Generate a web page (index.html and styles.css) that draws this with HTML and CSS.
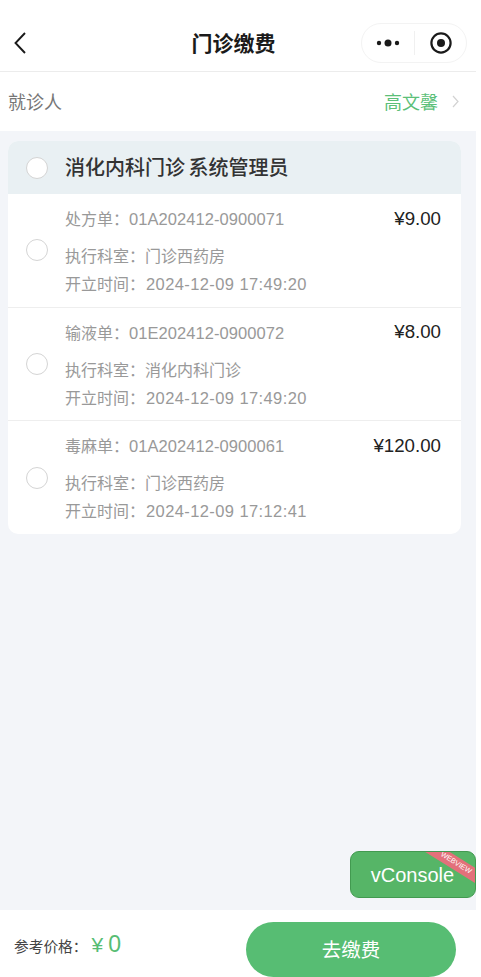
FILE: index.html
```html
<!DOCTYPE html>
<html lang="zh">
<head>
<meta charset="utf-8">
<title>门诊缴费</title>
<link rel="stylesheet" href="styles.css">
</head>
<body>
<div class="page">
  <header class="nav">
    <svg class="back" width="14" height="24" viewBox="0 0 14 24"><path d="M12 2 L2.5 12 L12 22" fill="none" stroke="#1a1a1a" stroke-width="1.9"/></svg>
    <h1 class="nav-title">门诊缴费</h1>
    <div class="capsule">
      <svg class="cap-dots" width="24" height="8" viewBox="0 0 24 8"><circle cx="3" cy="4" r="2.2" fill="#1a1a1a"/><circle cx="12" cy="4" r="3.5" fill="#1a1a1a"/><circle cx="21" cy="4" r="2.2" fill="#1a1a1a"/></svg>
      <span class="cap-sep"></span>
      <svg class="cap-target" width="22" height="22" viewBox="0 0 22 22"><circle cx="11" cy="11" r="9.6" fill="none" stroke="#1a1a1a" stroke-width="2.2"/><circle cx="11" cy="11" r="4" fill="#1a1a1a"/></svg>
    </div>
  </header>
  <section class="patient">
    <span class="patient-label">就诊人</span>
    <span class="patient-name">高文馨</span>
    <svg class="chev" width="7" height="13" viewBox="0 0 7 13"><path d="M1 1 L6 6.5 L1 12" fill="none" stroke="#d2d2d2" stroke-width="1.2"/></svg>
  </section>
  <main class="content">
    <div class="card">
      <div class="card-head">
        <span class="radio radio-head"></span>
        <span class="dept">消化内科门诊 系统管理员</span>
      </div>
      <div class="row">
        <span class="radio"></span>
        <div class="info">
          <div class="info-top"><span class="order">处方单：<span class="code">01A202412-0900071</span></span><span class="price">¥9.00</span></div>
          <div class="line line-dept">执行科室：门诊西药房</div>
          <div class="line">开立时间：<span class="date">2024-12-09 17:49:20</span></div>
        </div>
      </div>
      <div class="row">
        <span class="radio"></span>
        <div class="info">
          <div class="info-top"><span class="order">输液单：<span class="code">01E202412-0900072</span></span><span class="price">¥8.00</span></div>
          <div class="line line-dept">执行科室：消化内科门诊</div>
          <div class="line">开立时间：<span class="date">2024-12-09 17:49:20</span></div>
        </div>
      </div>
      <div class="row">
        <span class="radio"></span>
        <div class="info">
          <div class="info-top"><span class="order">毒麻单：<span class="code">01A202412-0900061</span></span><span class="price">¥120.00</span></div>
          <div class="line line-dept">执行科室：门诊西药房</div>
          <div class="line">开立时间：<span class="date">2024-12-09 17:12:41</span></div>
        </div>
      </div>
    </div>
  </main>
  <footer class="footer">
    <span class="total-label">参考价格：</span>
    <span class="total-value">¥<span class="total-num">0</span></span>
    <button class="pay">去缴费</button>
  </footer>
  <div class="vconsole">vConsole<span class="ribbon-band"></span><span class="ribbon-text">WEBVIEW</span></div>
</div>
</body>
</html>
```
FILE: styles.css
```css
* { box-sizing: border-box; }
html, body { margin: 0; padding: 0; background: #fff; }
body { font-family: "Liberation Sans", "Noto Sans CJK SC", sans-serif; }
.page { position: relative; width: 476px; height: 977px; display: flex; flex-direction: column; overflow: hidden; }
.nav { height: 72px; flex: none; display: grid; grid-template-columns: 93px 1fr 106px; align-items: center; padding: 15px 9px 0 13px; border-bottom: 1px solid #ececec; background: #fff; }
.back { display: block; }
.nav-title { margin: 2px 0 0; text-align: center; font-size: 21px; font-weight: 700; color: #1a1a1a; line-height: 28px; }
.capsule { width: 106px; height: 40px; border: 1px solid #f3f3f3; border-radius: 20px; display: flex; align-items: center; padding-left: 14px; background: #fff; }
.cap-sep { width: 1px; height: 24px; background: #f0f0f0; margin-left: 14px; }
.cap-target { margin-left: 15px; }
.patient { height: 59px; flex: none; display: flex; align-items: center; padding: 0 17px 2px 8px; background: #fff; }
.patient-label { font-size: 18px; color: #777; }
.patient-name { margin-left: auto; font-size: 18px; color: #5cbf79; }
.chev { margin-left: 14px; margin-top: 1px; }
.content { flex: 1; background: #f3f5f9; padding: 10px 15px 0 8px; }
.card { background: #fff; border-radius: 10px; overflow: hidden; }
.card-head { height: 53px; background: #e9f0f3; display: flex; align-items: center; padding-left: 18px; }
.radio { width: 22px; height: 22px; border-radius: 50%; border: 1px solid #d4d4d4; background: transparent; flex: none; }
.radio-head { background: #fff; }
.dept { margin-left: 17px; margin-bottom: 3px; font-size: 20px; font-weight: 500; color: #333; word-spacing: -2px; }
.row { height: 113.6px; display: flex; align-items: center; padding: 0 20px 0 18px; border-bottom: 1px solid #eeeeee; }
.row:last-child { height: 112.8px; border-bottom: 0; }
.info { flex: 1; margin-left: 17px; align-self: flex-start; padding-top: 13px; }
.info-top { display: flex; justify-content: space-between; align-items: center; height: 22px; margin-bottom: 15px; }
.order { font-size: 16px; color: #999; }
.code { font-size: 16.5px; letter-spacing: .06px; }
.price { font-size: 18.7px; color: #222; margin-top: 1px; }
.line { font-size: 16px; color: #999; line-height: 26px; }
.line-dept { margin-bottom: 1px; }
.date { font-size: 16.5px; letter-spacing: .4px; margin-left: 1px; }
.footer { height: 67px; flex: none; background: #fff; display: flex; align-items: center; padding: 0 20px 0 14px; }
.total-label { font-size: 14.7px; color: #444; margin-top: 3px; }
.total-value { font-size: 21px; color: #57bd73; margin-left: 4px; margin-top: 2px; }
.total-num { margin-left: 5px; font-size: 23px; }
.pay { margin-left: auto; width: 210px; height: 55px; border: 0; border-radius: 28px; background: #57bd73; color: #fff; font: inherit; font-size: 19.5px; margin-top: 12px; padding-bottom: 4px; }
.vconsole { position: absolute; left: 350px; top: 851px; width: 126px; height: 47px; background: #56b567; border: 1px solid #429a50; border-radius: 9px; color: #fff; font-size: 20px; display: flex; align-items: center; justify-content: center; overflow: hidden; padding: 1px 1px 0 0; }
.ribbon-band { position: absolute; right: -26px; top: 5px; width: 90px; height: 13px; background: #e3707a; transform: rotate(32deg); }
.ribbon-text { position: absolute; right: 1px; top: 6px; width: 36px; height: 10px; color: #fff; font-size: 7.2px; line-height: 10px; text-align: center; white-space: nowrap; transform: rotate(32deg); }
```
